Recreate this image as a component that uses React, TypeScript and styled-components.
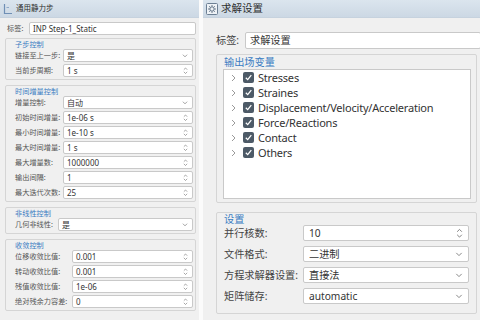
import React from "react";
import styled, { createGlobalStyle } from "styled-components";

const FONT = `"Noto Sans", "Noto Sans CJK SC", sans-serif`;

const GlobalStyle = createGlobalStyle`
  html, body { margin: 0; padding: 0; background: #ffffff; }
  body { font-family: ${FONT}; }
  * { box-sizing: border-box; }
`;

const Root = styled.div`
  display: flex;
  gap: 4px;
  width: 480px;
  height: 320px;
  overflow: hidden;
  background: #fbfbfb;
`;

const Panel = styled.div<{ $w?: number }>`
  ${(p) => (p.$w ? `width: ${p.$w}px; flex: none;` : `flex: 1; min-width: 0;`)}
  display: flex;
  flex-direction: column;
  background: #f0f0f0;
`;

const Header = styled.div<{ $h: number; $fs: number; $pl: number }>`
  height: ${(p) => p.$h}px;
  flex: none;
  display: flex;
  align-items: center;
  gap: 3px;
  padding-left: ${(p) => p.$pl}px;
  font-size: ${(p) => p.$fs}px;
  line-height: 1;
  color: #2e2e2e;
  background: linear-gradient(#dbe5ee, #ccd8e4);
  border-bottom: 1px solid #c6d2de;
`;

const Body = styled.div<{ $pt: number; $pr: number; $pl: number; $gap: number; $fs: number }>`
  display: flex;
  flex-direction: column;
  gap: ${(p) => p.$gap}px;
  padding: ${(p) => p.$pt}px ${(p) => p.$pr}px 0 ${(p) => p.$pl}px;
  font-size: ${(p) => p.$fs}px;
  line-height: 1;
`;

const Row = styled.div<{ $lw: number; $h: number; $indent?: number }>`
  display: grid;
  grid-template-columns: ${(p) => p.$lw}px 1fr;
  align-items: center;
  height: ${(p) => p.$h}px;
  padding-left: ${(p) => p.$indent ?? 0}px;
`;

const Label = styled.span<{ $c: string }>`
  color: ${(p) => p.$c};
  white-space: nowrap;
`;

const Box = styled.div<{ $pl: number; $pr: number; $fs?: number }>`
  height: 100%;
  background: #ffffff;
  border: 1px solid #c9c9c9;
  border-radius: 2px;
  display: flex;
  align-items: center;
  justify-content: space-between;
  padding: 0 ${(p) => p.$pr}px 0 ${(p) => p.$pl}px;
  color: #333;
  white-space: nowrap;
  ${(p) => (p.$fs ? `font-size: ${p.$fs}px;` : "")}
`;

const Group = styled.div<{ $pl: number; $pr: number; $pb: number; $mt?: number }>`
  border: 1px solid #d5d5d5;
  border-radius: 2px;
  margin-top: ${(p) => p.$mt ?? 0}px;
  padding: 0 ${(p) => p.$pr}px ${(p) => p.$pb}px ${(p) => p.$pl}px;
  display: flex;
  flex-direction: column;
`;

const GroupTitle = styled.div<{ $h: number }>`
  height: ${(p) => p.$h}px;
  line-height: ${(p) => p.$h}px;
  color: #3a7cc2;
`;

const Rows = styled.div<{ $gap: number }>`
  display: flex;
  flex-direction: column;
  gap: ${(p) => p.$gap}px;
`;

const TreeBox = styled.div`
  height: 130px;
  margin-left: -1px;
  background: #ffffff;
  border: 1px solid #c9c9c9;
  display: flex;
  flex-direction: column;
`;

const TreeRow = styled.div`
  height: 15px;
  line-height: 15px;
  display: flex;
  align-items: center;
  padding-left: 7px;
  font-size: 11px;
  letter-spacing: -0.2px;
  color: #333;
`;

const Check = styled.span`
  width: 11px;
  height: 11px;
  flex: none;
  border-radius: 2px;
  background: #4d5a67;
  display: inline-flex;
  align-items: center;
  justify-content: center;
  margin: 0 4px 0 7px;
`;

const SelectIcon = ({ s }: { s: number }) => (
  <svg width={s + 1} height={s / 2 + 1} viewBox="0 0 8 5">
    <path d="M1 1 L4 4 L7 1" fill="none" stroke="#7a7a7a" strokeWidth="1" />
  </svg>
);

const SpinIcon = ({ s }: { s: number }) => (
  <svg width={s} height={s * 1.5} viewBox="0 0 6 9">
    <path d="M1 3.2 L3 1.2 L5 3.2 M1 5.8 L3 7.8 L5 5.8" fill="none" stroke="#7a7a7a" strokeWidth="0.8" />
  </svg>
);

const TreeChevron = () => (
  <svg width="5" height="8" viewBox="0 0 5 8">
    <path d="M1 1 L4 4 L1 7" fill="none" stroke="#9a9a9a" strokeWidth="1" />
  </svg>
);

const CheckMark = () => (
  <svg width="9" height="9" viewBox="0 0 9 9">
    <path d="M1.8 4.8 L3.7 6.6 L7.3 2.2" fill="none" stroke="#ffffff" strokeWidth="1.3" />
  </svg>
);

const LeftHeaderIcon = () => (
  <svg width="10" height="12" viewBox="0 0 10 12">
    <path d="M1.5 1 V10.5 H9" fill="none" stroke="#6f8fb5" strokeWidth="1.2" />
    <path d="M3.5 4.5 H6" fill="none" stroke="#8fa9c8" strokeWidth="1" />
  </svg>
);

const RightHeaderIcon = () => (
  <svg width="12" height="12" viewBox="0 0 12 12">
    <rect x="0.5" y="0.5" width="11" height="11" rx="1" fill="#eef2f6" stroke="#6c7f93" />
    <circle cx="6" cy="6" r="2.2" fill="none" stroke="#5d6f82" strokeWidth="1" />
    <path d="M6 2 V3.4 M6 8.6 V10 M2 6 H3.4 M8.6 6 H10 M3.2 3.2 L4.2 4.2 M7.8 7.8 L8.8 8.8 M8.8 3.2 L7.8 4.2 M4.2 7.8 L3.2 8.8" stroke="#5d6f82" strokeWidth="0.9" />
  </svg>
);

type Kind = "text" | "select" | "spin";
type Field = { label: string; value: string; kind: Kind };

const LeftField = ({ f, lw }: { f: Field; lw: number }) => (
  <Row $lw={lw} $h={13}>
    <Label $c="#555">{f.label}</Label>
    <Box $pl={3} $pr={4} $fs={8}>
      <span>{f.value}</span>
      {f.kind === "select" && <SelectIcon s={5} />}
      {f.kind === "spin" && <SpinIcon s={5} />}
    </Box>
  </Row>
);

const RightField = ({ f }: { f: Field }) => (
  <Row $lw={79} $h={16}>
    <Label $c="#444">{f.label}</Label>
    <Box $pl={5} $pr={5}>
      <span>{f.value}</span>
      {f.kind === "select" && <SelectIcon s={7} />}
      {f.kind === "spin" && <SpinIcon s={7} />}
    </Box>
  </Row>
);

const leftGroups: { title: string; lw: number; fields: Field[] }[] = [
  {
    title: "子步控制",
    lw: 48,
    fields: [
      { label: "链接至上一步:", value: "是", kind: "select" },
      { label: "当前步周期:", value: "1 s", kind: "spin" },
    ],
  },
  {
    title: "时间增量控制",
    lw: 48,
    fields: [
      { label: "增量控制:", value: "自动", kind: "select" },
      { label: "初始时间增量:", value: "1e-06 s", kind: "spin" },
      { label: "最小时间增量:", value: "1e-10 s", kind: "spin" },
      { label: "最大时间增量:", value: "1 s", kind: "spin" },
      { label: "最大增量数:", value: "1000000", kind: "spin" },
      { label: "输出间隔:", value: "1", kind: "spin" },
      { label: "最大迭代次数:", value: "25", kind: "spin" },
    ],
  },
  {
    title: "非线性控制",
    lw: 43,
    fields: [{ label: "几何非线性:", value: "是", kind: "select" }],
  },
  {
    title: "收敛控制",
    lw: 57,
    fields: [
      { label: "位移收敛比值:", value: "0.001", kind: "spin" },
      { label: "转动收敛比值:", value: "0.001", kind: "spin" },
      { label: "残值收敛比值:", value: "1e-06", kind: "spin" },
      { label: "绝对残余力容差:", value: "0", kind: "spin" },
    ],
  },
];

const outputVars = [
  "Stresses",
  "Straines",
  "Displacement/Velocity/Acceleration",
  "Force/Reactions",
  "Contact",
  "Others",
];

const settings: Field[] = [
  { label: "并行核数:", value: "10", kind: "spin" },
  { label: "文件格式:", value: "二进制", kind: "select" },
  { label: "方程求解器设置:", value: "直接法", kind: "select" },
  { label: "矩阵储存:", value: "automatic", kind: "select" },
];

export default function App() {
  return (
    <>
      <GlobalStyle />
      <Root>
        <Panel $w={199}>
          <Header $h={18} $fs={7.5} $pl={3}>
            <LeftHeaderIcon />
            <span>通用静力步</span>
          </Header>
          <Body $pt={4} $pr={3} $pl={5} $gap={3} $fs={7.2}>
            <Row $lw={22} $h={13} $indent={2}>
              <Label $c="#555">标签:</Label>
              <Box $pl={3} $pr={4} $fs={8}>
                <span>INP Step-1_Static</span>
              </Box>
            </Row>
            {leftGroups.map((g, i) => (
              <Group key={g.title} $pl={9} $pr={2} $pb={2} $mt={i > 0 ? 2 : 0}>
                <GroupTitle $h={10}>{g.title}</GroupTitle>
                <Rows $gap={2}>
                  {g.fields.map((f) => (
                    <LeftField key={f.label} f={f} lw={g.lw} />
                  ))}
                </Rows>
              </Group>
            ))}
          </Body>
        </Panel>
        <Panel>
          <Header $h={18} $fs={10.5} $pl={3}>
            <RightHeaderIcon />
            <span>求解设置</span>
          </Header>
          <Body $pt={14} $pr={3} $pl={13} $gap={5} $fs={10.2}>
            <Row $lw={29} $h={17}>
              <Label $c="#444">标签:</Label>
              <Box $pl={4} $pr={4} style={{ marginRight: -4 }}>
                <span>求解设置</span>
              </Box>
            </Row>
            <Group $pl={7} $pr={5} $pb={3}>
              <GroupTitle $h={14}>输出场变量</GroupTitle>
              <TreeBox>
                {outputVars.map((v) => (
                  <TreeRow key={v}>
                    <TreeChevron />
                    <Check>
                      <CheckMark />
                    </Check>
                    <span>{v}</span>
                  </TreeRow>
                ))}
              </TreeBox>
            </Group>
            <Group $pl={7} $pr={7} $pb={9} $mt={4}>
              <GroupTitle $h={12}>设置</GroupTitle>
              <Rows $gap={5}>
                {settings.map((f) => (
                  <RightField key={f.label} f={f} />
                ))}
              </Rows>
            </Group>
          </Body>
        </Panel>
      </Root>
    </>
  );
}
